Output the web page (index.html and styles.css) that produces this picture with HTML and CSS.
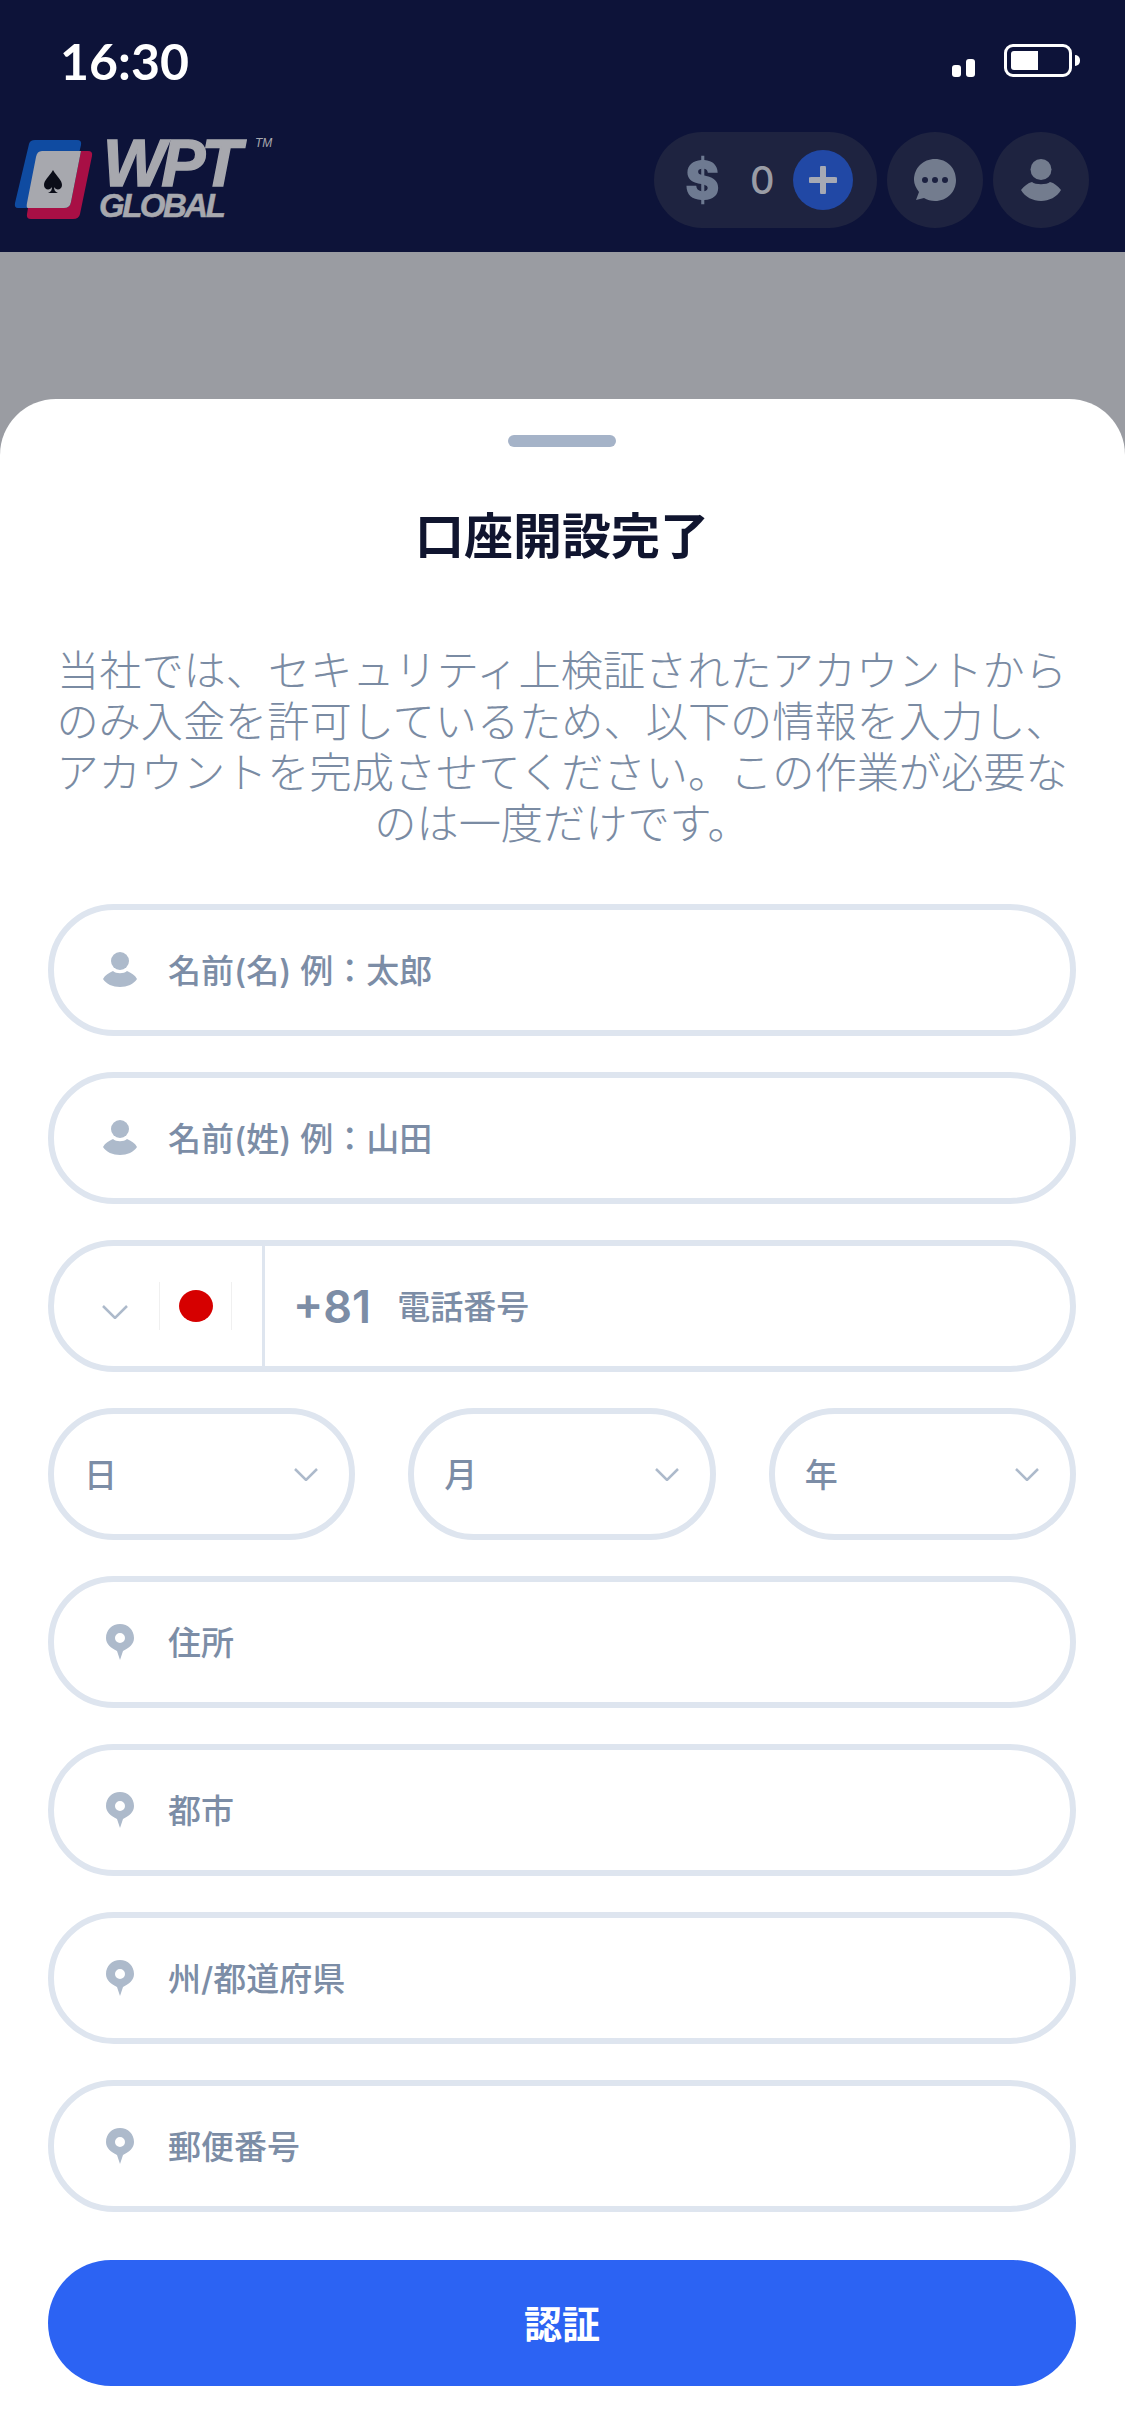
FILE: index.html
```html
<!DOCTYPE html>
<html lang="ja">
<head>
    <meta charset="UTF-8">
    <meta name="viewport" content="width=device-width, initial-scale=1.0">
    <title>口座開設完了</title>
    <link rel="stylesheet" href="styles.css">
</head>
<body>
    <header class="top">
        <div class="status-bar">
            <span class="clock">16:30</span>
            <div class="status-icons">
                <span class="bar bar-low"></span>
                <span class="bar bar-mid"></span>
                <span class="battery"><span class="battery-fill"></span></span>
                <span class="battery-tip"></span>
            </div>
        </div>
        <div class="app-bar">
            <div class="logo">
                <svg class="logo-card" viewBox="0 0 80 82" width="80" height="82">
                    <path d="M15 4 Q16 0 21 0 H63 Q68 0 67 5 L63 22 H30 Q25 22 24 27 L16 68 H4 Q0 68 1 63 Z" fill="#0f4ba1"/>
                    <path d="M67 11 H74 Q79 11 78 16 L66 74 Q65 79 59 79 H17 Q12 79 13 74 L14 68 H50 Q56 68 57 62 Z" fill="#a80f45"/>
                    <path d="M24 11 H67 L57 62 Q56 68 50 68 H14 Q12 68 13 63 L22 17 Q23 11 28 11 Z" fill="#a7a8ae"/>
                    <path d="M39 30 C43 37 48 40 48 45 C48 50 42 51 40 47 C40 50 41 52 44 53 H34 C37 52 38 50 38 47 C36 51 30 50 30 45 C30 40 35 37 39 30 Z" fill="#0b0d18"/>
                </svg>
                <div class="logo-words">
                    <span class="logo-wpt">WPT</span>
                    <span class="logo-global">GLOBAL</span>
                    <span class="logo-tm">TM</span>
                </div>
            </div>
            <div class="app-actions">
                <div class="balance">
                    <span class="balance-sign">$</span>
                    <span class="balance-num">0</span>
                    <span class="balance-add">
                        <svg viewBox="0 0 28 28" width="28" height="28"><path d="M14 2 V26 M2 14 H26" stroke="#a6a9b4" stroke-width="6" stroke-linecap="round"/></svg>
                    </span>
                </div>
                <div class="round-btn">
                    <svg viewBox="0 0 42 42" width="42" height="42">
                        <path d="M21 0 C33 0 42 9 42 21 C42 33 33 42 21 42 C17 42 13 41 10 39 L2 41 L5 33 C2 29 0 25 0 21 C0 9 9 0 21 0 Z" fill="#737c8e"/>
                        <circle cx="11" cy="21" r="3" fill="#1c2140"/>
                        <circle cx="21" cy="21" r="3" fill="#1c2140"/>
                        <circle cx="31" cy="21" r="3" fill="#1c2140"/>
                    </svg>
                </div>
                <div class="round-btn">
                    <svg viewBox="0 0 40 42" width="40" height="42">
                        <circle cx="20" cy="10.5" r="10.5" fill="#737c8e"/>
                        <path d="M0 31 C3 27 7 24 11 23 C14 26 26 26 29 23 C33 24 37 27 40 31 C36 38 28 42 20 42 C12 42 4 38 0 31 Z" fill="#737c8e"/>
                    </svg>
                </div>
            </div>
        </div>
    </header>

    <main class="sheet">
        <div class="handle"></div>
        <h1 class="title">口座開設完了</h1>
        <p class="intro">当社では、セキュリティ上検証されたアカウントからのみ入金を許可しているため、以下の情報を入力し、アカウントを完成させてください。この作業が必要なのは一度だけです。</p>

        <form class="form">
            <div class="field">
                <svg class="field-icon" viewBox="-1 0 36 36" width="36" height="36"><circle cx="17" cy="9" r="9" fill="#adbacb"/><path d="M0 27 C2 23 6 21 10 19 C13 22 21 22 24 19 C28 21 32 23 34 27 C31 32 24 35 17 35 C10 35 3 32 0 27 Z" fill="#adbacb"/></svg>
                <span class="field-text">名前(名) 例：太郎</span>
            </div>
            <div class="field">
                <svg class="field-icon" viewBox="-1 0 36 36" width="36" height="36"><circle cx="17" cy="9" r="9" fill="#adbacb"/><path d="M0 27 C2 23 6 21 10 19 C13 22 21 22 24 19 C28 21 32 23 34 27 C31 32 24 35 17 35 C10 35 3 32 0 27 Z" fill="#adbacb"/></svg>
                <span class="field-text">名前(姓) 例：山田</span>
            </div>
            <div class="field phone">
                <div class="phone-country">
                    <svg class="chevron chevron-big" viewBox="0 0 26 14" width="26" height="14"><path d="M1 1 L13 13 L25 1" fill="none" stroke="#adbacb" stroke-width="2.5"/></svg>
                    <span class="flag"><span class="flag-sun"></span></span>
                </div>
                <span class="phone-code">+81</span>
                <span class="field-text">電話番号</span>
            </div>
            <div class="date-row">
                <div class="field date"><span class="field-text">日</span><svg class="chevron" viewBox="0 0 24 13" width="24" height="13"><path d="M1 1 L12 12 L23 1" fill="none" stroke="#adbacb" stroke-width="2.5"/></svg></div>
                <div class="field date"><span class="field-text">月</span><svg class="chevron" viewBox="0 0 24 13" width="24" height="13"><path d="M1 1 L12 12 L23 1" fill="none" stroke="#adbacb" stroke-width="2.5"/></svg></div>
                <div class="field date"><span class="field-text">年</span><svg class="chevron" viewBox="0 0 24 13" width="24" height="13"><path d="M1 1 L12 12 L23 1" fill="none" stroke="#adbacb" stroke-width="2.5"/></svg></div>
            </div>
            <div class="field">
                <svg class="field-icon" viewBox="0 0 36 36" width="36" height="36"><path fill-rule="evenodd" d="M18 0 C26 0 32 6 32 14 C32 20 27 24 21 27 L18 36 L15 27 C9 24 4 20 4 14 C4 6 10 0 18 0 Z M18 9 A5 5 0 1 0 18 19 A5 5 0 1 0 18 9 Z" fill="#adbacb"/></svg>
                <span class="field-text">住所</span>
            </div>
            <div class="field">
                <svg class="field-icon" viewBox="0 0 36 36" width="36" height="36"><path fill-rule="evenodd" d="M18 0 C26 0 32 6 32 14 C32 20 27 24 21 27 L18 36 L15 27 C9 24 4 20 4 14 C4 6 10 0 18 0 Z M18 9 A5 5 0 1 0 18 19 A5 5 0 1 0 18 9 Z" fill="#adbacb"/></svg>
                <span class="field-text">都市</span>
            </div>
            <div class="field">
                <svg class="field-icon" viewBox="0 0 36 36" width="36" height="36"><path fill-rule="evenodd" d="M18 0 C26 0 32 6 32 14 C32 20 27 24 21 27 L18 36 L15 27 C9 24 4 20 4 14 C4 6 10 0 18 0 Z M18 9 A5 5 0 1 0 18 19 A5 5 0 1 0 18 9 Z" fill="#adbacb"/></svg>
                <span class="field-text">州/都道府県</span>
            </div>
            <div class="field">
                <svg class="field-icon" viewBox="0 0 36 36" width="36" height="36"><path fill-rule="evenodd" d="M18 0 C26 0 32 6 32 14 C32 20 27 24 21 27 L18 36 L15 27 C9 24 4 20 4 14 C4 6 10 0 18 0 Z M18 9 A5 5 0 1 0 18 19 A5 5 0 1 0 18 9 Z" fill="#adbacb"/></svg>
                <span class="field-text">郵便番号</span>
            </div>
            <button type="button" class="btn-verify">認証</button>
        </form>
    </main>
</body>
</html>
```

FILE: styles.css
```css
* {
    box-sizing: border-box;
}

html,
body {
    margin: 0;
    height: 2436px;
    overflow: hidden;
}

body {
    display: flex;
    flex-direction: column;
    background-color: #9a9ca2;
    font-family: Inter, "Noto Sans CJK JP", sans-serif;
}

.top {
    height: 252px;
    background-color: #0d1339;
    display: flex;
    flex-direction: column;
}

.status-bar {
    height: 132px;
    padding: 32px 45px 0 60px;
    display: flex;
    justify-content: space-between;
    align-items: flex-start;
}

.clock {
    font-family: Lato, sans-serif;
    font-size: 50px;
    font-weight: 700;
    line-height: 58px;
    color: #fff;
}

.status-icons {
    display: flex;
    align-items: flex-end;
    padding-top: 12px;
}

.bar {
    display: block;
    width: 9px;
    margin-right: 5px;
    background-color: #fff;
    border-radius: 3px;
}

.bar-low {
    height: 12px;
}

.bar-mid {
    height: 18px;
    margin-right: 29px;
}

.battery {
    display: block;
    width: 68px;
    height: 33px;
    border: 3px solid #fff;
    border-radius: 9px;
    padding: 4px;
}

.battery-fill {
    display: block;
    width: 27px;
    height: 100%;
    background-color: #fff;
    border-radius: 3px 0 0 3px;
}

.battery-tip {
    display: block;
    width: 5px;
    height: 11px;
    margin: 0 0 11px 3px;
    background-color: #fff;
    border-radius: 0 5px 5px 0;
}

.app-bar {
    display: flex;
    justify-content: space-between;
    padding: 0 36px 0 14px;
}

.logo {
    display: flex;
    gap: 12px;
    padding-top: 8px;
}

.logo-card {
    flex-shrink: 0;
}

.logo-words {
    position: relative;
    display: flex;
    flex-direction: column;
    font-family: "Liberation Sans", sans-serif;
    font-weight: 700;
    font-style: italic;
    color: #a7a8ae;
}

.logo-wpt {
    margin-left: -3px;
    font-size: 66px;
    line-height: 47px;
    letter-spacing: -4px;
    -webkit-text-stroke: 1.5px #a7a8ae;
}

.logo-global {
    margin-left: -7px;
    font-size: 33px;
    line-height: 38px;
    letter-spacing: -2.5px;
    -webkit-text-stroke: 0.5px #a7a8ae;
}

.logo-tm {
    position: absolute;
    left: 149px;
    top: -3px;
    font-size: 12px;
    line-height: 12px;
    font-weight: 400;
}

.app-actions {
    display: flex;
    gap: 10px;
}

.balance {
    width: 223px;
    height: 96px;
    padding: 0 24px 0 31px;
    display: flex;
    align-items: center;
    background-color: #1e2340;
    border-radius: 48px;
}

.balance-sign {
    width: 30px;
    font-size: 52px;
    font-weight: 900;
    color: #6e7a91;
    text-align: center;
}

.balance-num {
    margin-left: 35px;
    width: 24px;
    font-size: 38px;
    font-weight: 500;
    color: #9a9ca5;
}

.balance-add {
    margin-left: auto;
    width: 60px;
    height: 60px;
    display: flex;
    align-items: center;
    justify-content: center;
    background-color: #2148a5;
    border-radius: 50%;
}

.round-btn {
    width: 96px;
    height: 96px;
    display: flex;
    align-items: center;
    justify-content: center;
    background-color: #1e2340;
    border-radius: 50%;
}

.sheet {
    margin-top: 147px;
    flex-grow: 1;
    padding: 36px 49px 0 48px;
    background-color: #fff;
    border-radius: 56px 56px 0 0;
}

.handle {
    width: 108px;
    height: 12px;
    margin: 0 auto;
    background-color: #a5b3c8;
    border-radius: 6px;
}

.title {
    margin: 55px 0 0;
    font-size: 49px;
    line-height: 70px;
    font-weight: 700;
    text-align: center;
    color: #10152f;
}

.intro {
    margin: 73px -2px 0;
    font-size: 42.2px;
    line-height: 51px;
    font-weight: 300;
    text-align: center;
    color: #7a8ba3;
}

.form {
    margin-top: 55px;
    display: flex;
    flex-direction: column;
    gap: 36px;
}

.field {
    height: 132px;
    padding: 0 44px 0 48px;
    display: flex;
    align-items: center;
    border: 6px solid #dee5ef;
    border-radius: 66px;
}

.field-icon {
    flex-shrink: 0;
    margin-right: 30px;
}

.field-text {
    padding-bottom: 3px;
    font-size: 33px;
    font-weight: 500;
    color: #7c8da6;
}

.phone {
    padding-left: 0;
}

.phone-country {
    width: 211px;
    height: 100%;
    padding-left: 48px;
    display: flex;
    align-items: center;
    border-right: 3px solid #dee5ef;
}

.chevron-big {
    margin-top: 12px;
}

.flag {
    width: 73px;
    height: 48px;
    margin-left: 31px;
    display: flex;
    align-items: center;
    justify-content: center;
    border-left: 1px solid #f0f0f0;
    border-right: 1px solid #f0f0f0;
}

.flag-sun {
    width: 34px;
    height: 32px;
    background-color: #d60000;
    border-radius: 50%;
}

.phone-code {
    margin: 0 26px 0 28px;
    font-size: 45px;
    font-weight: 600;
    color: #7c8da6;
}

.date-row {
    display: grid;
    grid-template-columns: repeat(3, 1fr);
    gap: 53px;
}

.date {
    padding: 0 31px 0 30px;
    justify-content: space-between;
}

.btn-verify {
    height: 126px;
    margin-top: 12px;
    padding-bottom: 5px;
    background-color: #2c63f3;
    color: #fff;
    border: none;
    border-radius: 63px;
    font-family: inherit;
    font-size: 38px;
    font-weight: 700;
}
```
